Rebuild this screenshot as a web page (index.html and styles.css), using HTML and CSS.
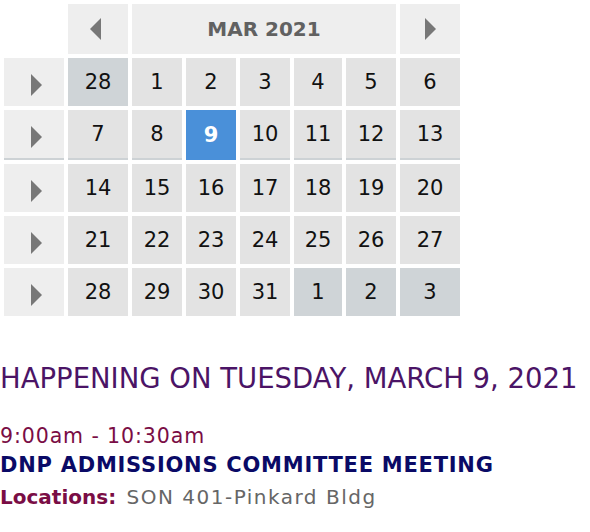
FILE: index.html
```html
<!DOCTYPE html>
<html>
<head>
<meta charset="utf-8">
<link rel="stylesheet" href="styles.css">
</head>
<body>
<div class="calendar">
  <div class="blank"></div>
  <div class="nav prev"><svg width="13" height="22" viewBox="0 0 13 22"><polygon points="12,0 12,22 1,11" fill="#777"/></svg></div>
  <div class="title">MAR 2021</div>
  <div class="nav next"><svg width="13" height="22" viewBox="0 0 13 22"><polygon points="1,0 1,22 12,11" fill="#777"/></svg></div>

  <div class="week"><svg width="13" height="22" viewBox="0 0 13 22"><polygon points="1,0 1,22 12,11" fill="#777"/></svg></div>
  <div class="day other">28</div><div class="day">1</div><div class="day">2</div><div class="day">3</div><div class="day">4</div><div class="day">5</div><div class="day">6</div>

  <div class="week cur"><svg width="13" height="22" viewBox="0 0 13 22"><polygon points="1,0 1,22 12,11" fill="#777"/></svg></div>
  <div class="day cur">7</div><div class="day cur">8</div><div class="day selected">9</div><div class="day cur">10</div><div class="day cur">11</div><div class="day cur">12</div><div class="day cur">13</div>

  <div class="week"><svg width="13" height="22" viewBox="0 0 13 22"><polygon points="1,0 1,22 12,11" fill="#777"/></svg></div>
  <div class="day">14</div><div class="day">15</div><div class="day">16</div><div class="day">17</div><div class="day">18</div><div class="day">19</div><div class="day">20</div>

  <div class="week"><svg width="13" height="22" viewBox="0 0 13 22"><polygon points="1,0 1,22 12,11" fill="#777"/></svg></div>
  <div class="day">21</div><div class="day">22</div><div class="day">23</div><div class="day">24</div><div class="day">25</div><div class="day">26</div><div class="day">27</div>

  <div class="week"><svg width="13" height="22" viewBox="0 0 13 22"><polygon points="1,0 1,22 12,11" fill="#777"/></svg></div>
  <div class="day">28</div><div class="day">29</div><div class="day">30</div><div class="day">31</div><div class="day other">1</div><div class="day other">2</div><div class="day other">3</div>
</div>

<h2 class="heading">HAPPENING ON TUESDAY, MARCH 9, 2021</h2>

<div class="event">
  <div class="time">9:00am - 10:30am</div>
  <div class="event-title">DNP ADMISSIONS COMMITTEE MEETING</div>
  <div class="location"><span class="loc-label">Locations:</span> <span class="loc-value">SON 401-Pinkard Bldg</span></div>
</div>
</body>
</html>
```
FILE: styles.css
```css
html, body {
  margin: 0;
  padding: 0;
  background: #fff;
}
body {
  font-family: "DejaVu Sans", "Open Sans", sans-serif;
  width: 590px;
}
.calendar {
  display: grid;
  grid-template-columns: 60px 60px 50px 50px 50px 48px 50px 60px;
  grid-template-rows: 50px 48px 50px 48px 48px 48px;
  gap: 4px;
  padding: 4px;
  width: max-content;
}
.blank { background: transparent; }
.nav, .title, .week {
  background: #eeeeee;
  display: flex;
  align-items: center;
  justify-content: center;
}
.title {
  grid-column: 3 / 8;
  font-weight: 700;
  font-size: 20px;
  color: #616161;
}
.week svg { margin: 6px 0 0 4px; }
.prev svg { margin-left: -6px; }
.day {
  background: #e3e3e3;
  display: flex;
  align-items: center;
  justify-content: center;
  font-size: 21px;
  color: #111;
}
.day.other { background: #cfd4d7; }
.day.cur, .week.cur { border-bottom: 2px solid #cdd2d5; }
.day.selected {
  background: #4a90d9;
  color: #fff;
  font-weight: 700;
}
.heading {
  margin: 41px 0 0 0;
  font-size: 27.5px;
  font-weight: 400;
  line-height: 34px;
  color: #4b1466;
}
.event {
  margin-top: 27px;
  font-size: 20px;
}
.time {
  color: #7a0d45;
  font-size: 20.5px;
  line-height: 29px;
  letter-spacing: 0.9px;
  padding-bottom: 2px;
}
.event-title {
  color: #0a0a66;
  font-weight: 700;
  font-size: 21px;
  line-height: 24px;
  letter-spacing: 0.75px;
}
.location {
  margin-top: 8px;
  line-height: 24px;
}
.loc-label { color: #7a0d45; font-weight: 700; }
.loc-value { color: #666; margin-left: 4px; letter-spacing: 1.5px; }
```
